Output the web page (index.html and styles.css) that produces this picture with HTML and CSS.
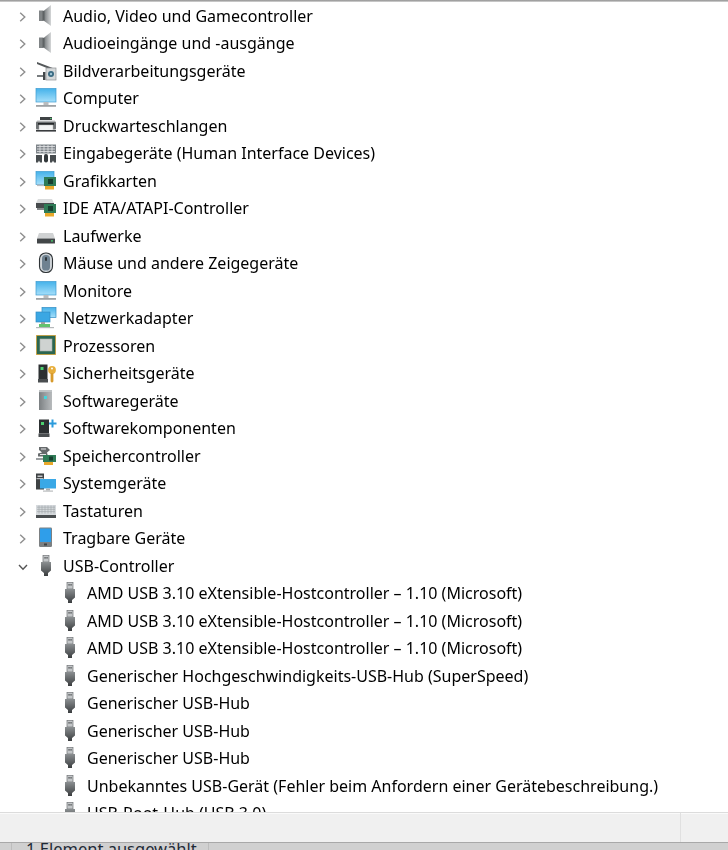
FILE: index.html
```html
<!DOCTYPE html>
<html lang="de">
<head>
<meta charset="utf-8">
<title>Geräte-Manager</title>
<link rel="stylesheet" href="styles.css">
</head>
<body>
<svg class="defs" width="0" height="0" aria-hidden="true">
<defs>
<linearGradient id="gs" x1="0" x2="1" y1="0" y2="0"><stop offset="0" stop-color="#6f7375"/><stop offset=".55" stop-color="#a9acae"/><stop offset="1" stop-color="#d4d6d7"/></linearGradient>
<linearGradient id="gb" x1="0" x2="0" y1="0" y2="1"><stop offset="0" stop-color="#45b2ea"/><stop offset="1" stop-color="#a5dffa"/></linearGradient>
<linearGradient id="gt" x1="0" x2="0" y1="0" y2="1"><stop offset="0" stop-color="#8b8f91"/><stop offset="1" stop-color="#3a3d3f"/></linearGradient>
<symbol id="i-speaker" viewBox="0 0 22 22"><rect x="4" y="5.5" width="4.5" height="10.5" fill="#808486"/><path d="M8.5 6 L16 0 V21 L8.5 15.5Z" fill="url(#gs)"/><path d="M7.5 6 L9.5 6 V15.5 L7.5 15.5Z" fill="#5e6264"/></symbol>
<symbol id="i-camera" viewBox="0 0 22 22"><path d="M2 2 L19 8.5 L18 10.5 L2 4Z" fill="#55595b"/><rect x="11" y="8" width="10" height="12" fill="#d6d9da" stroke="#8f9294" stroke-width=".7"/><circle cx="16" cy="14" r="3" fill="#3a6a82"/><circle cx="16" cy="14" r="1.2" fill="#9fc5d6"/><rect x="2" y="15" width="7" height="2" fill="#787c7e"/><rect x="8" y="12" width="2.4" height="8" fill="#43474a"/></symbol>
<symbol id="i-monitor" viewBox="0 0 22 22"><rect x="1" y="1.5" width="20" height="13.5" fill="url(#gb)" stroke="#3d9bd0" stroke-width=".7"/><rect x="8.5" y="15" width="5" height="3" fill="#b9bcbe"/><rect x="1" y="18" width="20" height="1.8" fill="#9ea2a5"/></symbol>
<symbol id="i-printer" viewBox="0 0 22 22"><rect x="5" y="2" width="12" height="3" fill="#3f4345"/><rect x="2" y="5" width="18" height="1.4" fill="#dfe1e2"/><rect x="1" y="6.4" width="20" height="8" rx="1" fill="#6e7274"/><rect x="3" y="8" width="16" height="1.8" fill="#25282a"/><rect x="4" y="10" width="14" height="5.6" fill="#f3f4f4" stroke="#aaa" stroke-width=".4"/><rect x="1" y="15" width="20" height="1.6" fill="#3a3d3f"/><rect x="15" y="3" width="1.6" height="1" fill="#4cc36c"/></symbol>
<symbol id="i-hid" viewBox="0 0 22 22"><rect x="1" y="2.5" width="20" height="9" fill="#7f858a"/><path d="M2 4.5h18M2 7h18M2 9.5h18M5 3v8M9 3v8M13 3v8M17 3v8" stroke="#e4e6e8" stroke-width=".8"/><path d="M1 13 h6 v7.5 h-2 l-1-2 -1 2 h-2Z" fill="#474c4f"/><rect x="9" y="12" width="4" height="8.5" rx="2" fill="#33383b"/><path d="M15 13 h6 v7.5 h-2 l-1-2 -1 2 h-2Z" fill="#474c4f"/></symbol>
<symbol id="i-gpu" viewBox="0 0 22 22"><rect x="1" y="1.5" width="18" height="13" fill="url(#gb)" stroke="#3d9bd0" stroke-width=".7"/><rect x="2" y="14.5" width="12" height="1.6" fill="#b9bcbe"/><rect x="9" y="7" width="12" height="9" fill="#2f7c57"/><rect x="13" y="9" width="5" height="5" fill="#173f30"/><rect x="10" y="16" width="9" height="3.5" fill="#e9a92b"/></symbol>
<symbol id="i-ide" viewBox="0 0 22 22"><path d="M3 2h14l2 4H1Z" fill="#d9dbdc"/><rect x="1" y="6" width="18" height="5" fill="#474b4d"/><rect x="2" y="11" width="7" height="2" fill="#85898b"/><rect x="9" y="7" width="12" height="9" fill="#2f7c57"/><rect x="13" y="9" width="5" height="5" fill="#173f30"/><rect x="10" y="16" width="9" height="3.5" fill="#e9a92b"/></symbol>
<symbol id="i-drive" viewBox="0 0 22 22"><path d="M4 8h14l2 5.5H2Z" fill="#d0d2d3"/><rect x="2" y="13.5" width="18" height="5" rx=".6" fill="#424648"/><rect x="16" y="15.2" width="2" height="1.4" fill="#48c46c"/></symbol>
<symbol id="i-mouse" viewBox="0 0 22 22"><rect x="4.5" y="1" width="13" height="19.5" rx="6" fill="#cfd4d8" stroke="#2e3336" stroke-width="1.1"/><rect x="7" y="3" width="8" height="15.5" rx="3.6" fill="#6f8291"/><rect x="10" y="5" width="2" height="4" rx="1" fill="#2f363b"/></symbol>
<symbol id="i-net" viewBox="0 0 22 22"><rect x="7" y=".5" width="14" height="10" fill="url(#gb)" stroke="#2f8cc4" stroke-width=".7"/><rect x="1" y="5" width="14" height="10" fill="#3ba7e3" stroke="#2f8cc4" stroke-width=".7"/><rect x="6" y="15" width="4" height="2" fill="#9c9fa1"/><rect x="4" y="17" width="11" height="3" fill="#62c26f"/><rect x="1" y="20" width="18" height="1.2" fill="#b5b8ba"/></symbol>
<symbol id="i-cpu" viewBox="0 0 22 22"><rect x="1" y="0" width="20" height="20" fill="#e1b04a"/><rect x="1.8" y=".8" width="18.4" height="18.4" fill="#2b6650"/><rect x="5" y="4" width="12" height="12" fill="#cfd3d1" stroke="#a9aeac" stroke-width=".6"/></symbol>
<symbol id="i-security" viewBox="0 0 22 22"><rect x="3.5" y="2.5" width="9" height="14.5" fill="#2c3032"/><rect x="5.5" y="5" width="3" height="3" fill="#4bd16f"/><rect x="3" y="17" width="10" height="3.5" fill="#4a4e50"/><circle cx="17" cy="8" r="3.9" fill="#e7ae3c"/><circle cx="17" cy="6.6" r="1" fill="#fff"/><path d="M15.6 11h2.8v8.5l-1.4 1.2-1.4-1.2Z" fill="#d79a2b"/></symbol>
<symbol id="i-software" viewBox="0 0 22 22"><path d="M4 0h13v20H4Z" fill="#8d9295"/><rect x="4" y="0" width="13" height="2.2" fill="#bfc3c5"/><path d="M4 2.2h13v17.8H4Z" fill="url(#gs)" opacity=".6"/><rect x="9" y="6" width="3" height="3" fill="#45d6dc"/></symbol>
<symbol id="i-swcomp" viewBox="0 0 22 22"><rect x="4" y="2.5" width="10" height="14" fill="#2c3032"/><rect x="6" y="5" width="3" height="3" fill="#4bd16f"/><rect x="3.5" y="16.5" width="11" height="3.5" fill="#4a4e50"/><path d="M16.5 2.5h2v3H21.5V7.500h-3v3h-2v-3H14V5.500h2.500Z" fill="#2b9bdc"/></symbol>
<symbol id="i-storage" viewBox="0 0 22 22"><path d="M4 2h8l3 3-3 2.500 1 4H3V8.500l4-1-3-2.500Z" fill="#666a6c"/><path d="M6 4h5M5 9.500h6" stroke="#e5e6e7" stroke-width="1.200"/><rect x="8" y="10" width="13" height="7" fill="#2f7c57"/><rect x="14" y="11.500" width="4" height="4" fill="#173f30"/><rect x="9" y="17" width="9" height="3" fill="#e9a92b"/><path d="M1 13h7v2H1Z" fill="#9b9fa1"/></symbol>
<symbol id="i-system" viewBox="0 0 22 22"><rect x="1" y="1.500" width="8" height="16" fill="#3e4244"/><rect x="2.500" y="3.500" width="5" height="1.500" fill="#c5c8ca"/><rect x="1.500" y="6" width="7" height="1.200" fill="#b7babc"/><rect x="5" y="7" width="16" height="9.500" fill="#3aa8e6"/><rect x="11" y="16.500" width="4" height="2" fill="#a9adb0"/><rect x="8" y="18.500" width="10" height="1.200" fill="#b9bcbe"/></symbol>
<symbol id="i-keyboard" viewBox="0 0 22 22"><rect x="1" y="5" width="20" height="10" fill="#d6dadd"/><path d="M2 7.200h18M2 9.400h18M2 11.600h18M4 5.500v8M7 5.500v8M10 5.500v8M13 5.500v8M16 5.500v8M19 5.500v8" stroke="#9ea4a8" stroke-width=".6"/><rect x="1" y="15" width="20" height="3" fill="#4a4e50"/></symbol>
<symbol id="i-portable" viewBox="0 0 22 22"><rect x="4" y=".5" width="13" height="19.500" rx="1.200" fill="#7c8082"/><rect x="5" y="1.500" width="11" height="13.500" fill="#2f9eea"/><rect x="9" y="16.500" width="3" height="2" fill="#3d4143"/></symbol>
<symbol id="i-usb" viewBox="0 0 22 22"><rect x="8" y=".6" width="6" height="6.400" fill="#c3c6c8" stroke="#6f7375" stroke-width=".7"/><rect x="9.400" y="2.200" width="1.300" height="1.300" fill="#3f4345"/><rect x="11.400" y="2.200" width="1.300" height="1.300" fill="#3f4345"/><path d="M6 7h10v8.500l-3 2.500v3h-4v-3l-3-2.500Z" fill="url(#gt)"/></symbol>
<symbol id="i-chev" viewBox="0 0 10 10"><path d="M2.200 .8 L6.800 5 L2.200 9.200" fill="none" stroke="#8f8f8f" stroke-width="1.400"/></symbol>
<symbol id="i-chevd" viewBox="0 0 10 10"><path d="M1 3 L5 7.200 L9 3" fill="none" stroke="#555" stroke-width="1.400"/></symbol>
</defs>
</svg>
<div class="app">
  <div class="topline"></div>
  <ul class="tree">
    <li class="row"><svg class="chev"><use href="#i-chev"/></svg><svg class="icon"><use href="#i-speaker"/></svg><span>Audio, Video und Gamecontroller</span></li>
    <li class="row"><svg class="chev"><use href="#i-chev"/></svg><svg class="icon"><use href="#i-speaker"/></svg><span>Audioeingänge und -ausgänge</span></li>
    <li class="row"><svg class="chev"><use href="#i-chev"/></svg><svg class="icon"><use href="#i-camera"/></svg><span>Bildverarbeitungsgeräte</span></li>
    <li class="row"><svg class="chev"><use href="#i-chev"/></svg><svg class="icon"><use href="#i-monitor"/></svg><span>Computer</span></li>
    <li class="row"><svg class="chev"><use href="#i-chev"/></svg><svg class="icon"><use href="#i-printer"/></svg><span>Druckwarteschlangen</span></li>
    <li class="row"><svg class="chev"><use href="#i-chev"/></svg><svg class="icon"><use href="#i-hid"/></svg><span>Eingabegeräte (Human Interface Devices)</span></li>
    <li class="row"><svg class="chev"><use href="#i-chev"/></svg><svg class="icon"><use href="#i-gpu"/></svg><span>Grafikkarten</span></li>
    <li class="row"><svg class="chev"><use href="#i-chev"/></svg><svg class="icon"><use href="#i-ide"/></svg><span>IDE ATA/ATAPI-Controller</span></li>
    <li class="row"><svg class="chev"><use href="#i-chev"/></svg><svg class="icon"><use href="#i-drive"/></svg><span>Laufwerke</span></li>
    <li class="row"><svg class="chev"><use href="#i-chev"/></svg><svg class="icon"><use href="#i-mouse"/></svg><span>Mäuse und andere Zeigegeräte</span></li>
    <li class="row"><svg class="chev"><use href="#i-chev"/></svg><svg class="icon"><use href="#i-monitor"/></svg><span>Monitore</span></li>
    <li class="row"><svg class="chev"><use href="#i-chev"/></svg><svg class="icon"><use href="#i-net"/></svg><span>Netzwerkadapter</span></li>
    <li class="row"><svg class="chev"><use href="#i-chev"/></svg><svg class="icon"><use href="#i-cpu"/></svg><span>Prozessoren</span></li>
    <li class="row"><svg class="chev"><use href="#i-chev"/></svg><svg class="icon"><use href="#i-security"/></svg><span>Sicherheitsgeräte</span></li>
    <li class="row"><svg class="chev"><use href="#i-chev"/></svg><svg class="icon"><use href="#i-software"/></svg><span>Softwaregeräte</span></li>
    <li class="row"><svg class="chev"><use href="#i-chev"/></svg><svg class="icon"><use href="#i-swcomp"/></svg><span>Softwarekomponenten</span></li>
    <li class="row"><svg class="chev"><use href="#i-chev"/></svg><svg class="icon"><use href="#i-storage"/></svg><span>Speichercontroller</span></li>
    <li class="row"><svg class="chev"><use href="#i-chev"/></svg><svg class="icon"><use href="#i-system"/></svg><span>Systemgeräte</span></li>
    <li class="row"><svg class="chev"><use href="#i-chev"/></svg><svg class="icon"><use href="#i-keyboard"/></svg><span>Tastaturen</span></li>
    <li class="row"><svg class="chev"><use href="#i-chev"/></svg><svg class="icon"><use href="#i-portable"/></svg><span>Tragbare Geräte</span></li>
    <li class="row"><svg class="chev"><use href="#i-chevd"/></svg><svg class="icon"><use href="#i-usb"/></svg><span>USB-Controller</span></li>
    <li class="row child"><svg class="icon"><use href="#i-usb"/></svg><span>AMD USB 3.10 eXtensible-Hostcontroller – 1.10 (Microsoft)</span></li>
    <li class="row child"><svg class="icon"><use href="#i-usb"/></svg><span>AMD USB 3.10 eXtensible-Hostcontroller – 1.10 (Microsoft)</span></li>
    <li class="row child"><svg class="icon"><use href="#i-usb"/></svg><span>AMD USB 3.10 eXtensible-Hostcontroller – 1.10 (Microsoft)</span></li>
    <li class="row child"><svg class="icon"><use href="#i-usb"/></svg><span>Generischer Hochgeschwindigkeits-USB-Hub (SuperSpeed)</span></li>
    <li class="row child"><svg class="icon"><use href="#i-usb"/></svg><span>Generischer USB-Hub</span></li>
    <li class="row child"><svg class="icon"><use href="#i-usb"/></svg><span>Generischer USB-Hub</span></li>
    <li class="row child"><svg class="icon"><use href="#i-usb"/></svg><span>Generischer USB-Hub</span></li>
    <li class="row child"><svg class="icon"><use href="#i-usb"/></svg><span>Unbekanntes USB-Gerät (Fehler beim Anfordern einer Gerätebeschreibung.)</span></li>
    <li class="row child"><svg class="icon"><use href="#i-usb"/></svg><span>USB-Root-Hub (USB 3.0)</span></li>
  </ul>
  <div class="toolbar"><div class="toolbar-main"></div><div class="toolbar-end"></div></div>
  <div class="status"><div class="status-grip"></div><div class="status-text">1 Element ausgewählt</div><div class="status-rest"></div></div>
</div>
</body>
</html>
```
FILE: styles.css
```css
* { box-sizing: border-box; }
html, body { margin: 0; padding: 0; height: 850px; overflow: hidden; background: #fff; }
.defs { position: absolute; }
.app {
  height: 850px;
  display: flex;
  flex-direction: column;
  overflow: hidden;
  font-family: "Noto Sans", "Open Sans", sans-serif;
  color: #000;
}
.topline { height: 2px; flex: none; background: linear-gradient(#8e8e8e, #d8d8d8); }
.tree { flex: 1; min-height: 0; overflow: hidden; list-style: none; margin: 0; padding: 0; background: #fff; filter: blur(.3px); }
.row {
  height: 27.5px;
  display: flex;
  align-items: center;
  padding-left: 18px;
  font-size: 16px;
  white-space: nowrap;
}
.row.child { padding-left: 59px; }
.chev { width: 10px; height: 10px; flex: none; margin-right: 7px; margin-top: 2px; }
.icon { width: 22px; height: 22px; flex: none; margin-right: 6px; }
.toolbar {
  height: 30px;
  flex: none;
  display: flex;
  background: #f0f0f0;
  border-top: 1px solid #dcdcdc;
  box-shadow: inset 0 1px 0 #fafafa;
}
.toolbar-main { width: 681px; border-right: 1px solid #e0e0e0; }
.toolbar-end { flex: 1; }
.status {
  height: 8px;
  flex: none;
  display: flex;
  background: #d0d0d0;
  border-top: 1px solid #a8a8a8;
  font-size: 16.5px;
  overflow: hidden;
}
.status-grip { width: 12px; border-right: 1px solid #bdbdbd; }
.status-text { width: 197px; padding-left: 14px; border-right: 1px solid #bdbdbd; line-height: 11px; white-space: nowrap; color: #1f2a36; }
.status-rest { flex: 1; }
```
